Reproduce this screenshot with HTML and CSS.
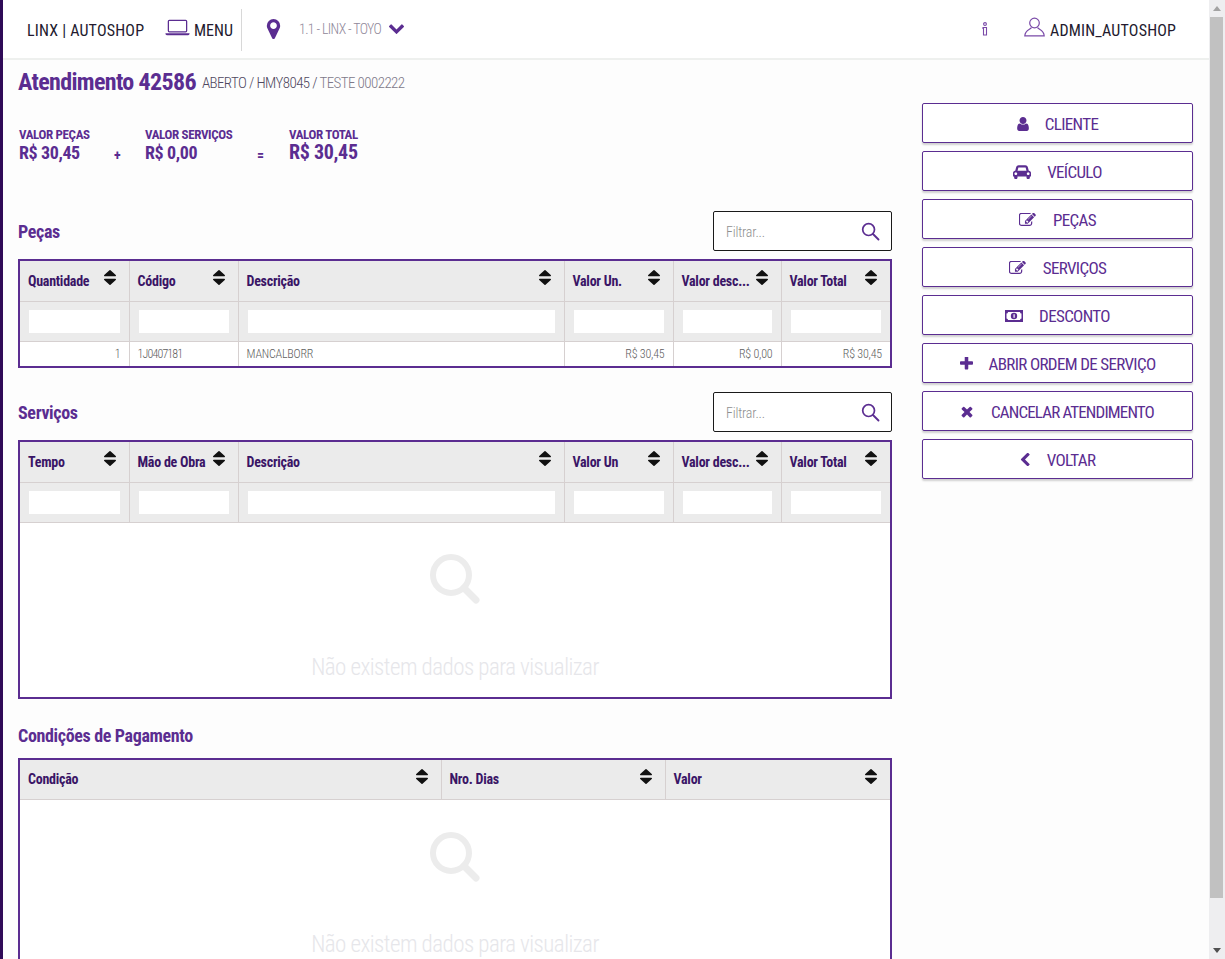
FILE: index.html
```html
<!DOCTYPE html>
<html lang="pt-BR">
<head>
<meta charset="utf-8">
<title>Atendimento 42586</title>
<link rel="stylesheet" href="styles.css">
</head>
<body>
<svg class="defs" width="0" height="0" aria-hidden="true">
  <symbol id="sort" viewBox="384 192 1024 1408" preserveAspectRatio="none"><path d="M1408 1088q0 26-19 45l-448 448q-19 19-45 19t-45-19l-448-448q-19-19-19-45t19-45 45-19h896q26 0 45 19t19 45zm0-384q0 26-19 45t-45 19h-896q-26 0-45-19t-19-45 19-45l448-448q19-19 45-19t45 19l448 448q19 19 19 45z"/></symbol>
  <symbol id="edit" viewBox="128 160 1664 1472"><path d="M888 1184l116-116-152-152-116 116v56h96v96h56zm440-720q-16-16-33 1l-350 350q-17 17-1 33t33-1l350-350q17-17 1-33zm80 594v190q0 119-84.500 203.500t-203.500 84.500h-832q-119 0-203.500-84.500t-84.500-203.500v-832q0-119 84.500-203.500t203.500-84.500h832q63 0 117 25 15 7 18 23 3 17-9 29l-49 49q-14 14-32 8-23-6-45-6h-832q-66 0-113 47t-47 113v832q0 66 47 113t113 47h832q66 0 113-47t47-113v-126q0-13 9-22l64-64q15-15 35-7t20 29zm-96-738l288 288-672 672h-288v-288zm444 132l-92 92-288-288 92-92q28-28 68-28t68 28l152 152q28 28 28 68t-28 68z"/></symbol>
  <symbol id="lens" viewBox="0 0 20 20"><circle cx="8" cy="8" r="6.200" fill="none" stroke="currentColor" stroke-width="1.800"/><path d="M12.600 12.600 L18.400 18.400" fill="none" stroke="currentColor" stroke-width="2" stroke-linecap="round"/></symbol>
  <symbol id="nodata" viewBox="0 0 50 50"><circle cx="21" cy="21" r="18" fill="none" stroke="currentColor" stroke-width="6"/><path d="M34 34 L46 46" fill="none" stroke="currentColor" stroke-width="7" stroke-linecap="round"/></symbol>
</svg>
<div class="app">
  <div class="rail"></div>
  <div class="page">
    <header class="topbar">
      <span class="brand">LINX | AUTOSHOP</span>
      <span class="menu">
        <svg class="laptop" viewBox="0 0 26 17"><rect x="3.500" y="1" width="19" height="12" rx="1" fill="none" stroke="currentColor" stroke-width="1.300"/><path d="M0.500 14.500 H25.500 V15 Q25.500 16.500 24 16.500 H2 Q0.500 16.500 0.500 15 Z" fill="currentColor"/></svg>
        <span class="menu-text">MENU</span>
      </span>
      <span class="store">
        <svg class="pin" viewBox="384 128 1024 1536"><path d="M1152 640q0-106-75-181t-181-75-181 75-75 181 75 181 181 75 181-75 75-181zm256 0q0 109-33 179l-364 774q-16 33-47.500 52t-67.500 19-67.500-19-46.500-52l-365-774q-33-70-33-179 0-212 150-362t362-150 362 150 150 362z"/></svg>
        <span class="store-name">1.1 - LINX - TOYO</span>
        <svg class="chev" viewBox="90 500 1610 1070"><path d="M1683 808l-742 741q-19 19-45 19t-45-19l-742-741q-19-19-19-45.500t19-45.500l166-165q19-19 45-19t45 19l531 531 531-531q19-19 45-19t45 19l166 165q19 19 19 45.500t-19 45.500z"/></svg>
      </span>
      <span class="info">
        <svg viewBox="0 0 6 14"><circle cx="3" cy="2" r="1.400" fill="none" stroke="currentColor" stroke-width="1.100"/><path d="M1 5.500 H4.500 V13 H1.500 V6.500 H1 Z" fill="none" stroke="currentColor" stroke-width="1.100"/></svg>
      </span>
      <span class="user">
        <svg viewBox="0 0 21 20"><circle cx="10.500" cy="6" r="4.800" fill="none" stroke="currentColor" stroke-width="1.200"/><path d="M7.500 10.500 C6.500 12.500 1 13 .8 18.900 H20.200 C20 13 14.500 12.500 13.500 10.500" fill="none" stroke="currentColor" stroke-width="1.200"/></svg>
        <span class="user-name">ADMIN_AUTOSHOP</span>
      </span>
    </header>

    <div class="title-row">
      <h1 class="title">Atendimento 42586</h1>
      <span class="crumb">ABERTO / HMY8045 / <span class="crumb-light">TESTE 0002222</span></span>
    </div>

    <div class="content">
      <main class="main">
        <section class="totals">
          <div class="total t1"><div class="t-label">VALOR PEÇAS</div><div class="t-value">R$ 30,45</div></div>
          <div class="op o1">+</div>
          <div class="total t2"><div class="t-label">VALOR SERVIÇOS</div><div class="t-value">R$ 0,00</div></div>
          <div class="op o2">=</div>
          <div class="total"><div class="t-label">VALOR TOTAL</div><div class="t-value big">R$ 30,45</div></div>
        </section>

        <section class="block b-pecas">
          <div class="block-head">
            <h2>Peças</h2>
            <div class="filter"><span class="filter-ph">Filtrar...</span><svg class="filter-icon"><use href="#lens"/></svg></div>
          </div>
          <div class="grid-box">
            <table class="grid">
              <colgroup><col class="c1"><col class="c2"><col class="c3"><col class="c4"><col class="c5"><col class="c6"></colgroup>
              <thead>
                <tr class="hrow">
                  <th><div class="th"><span>Quantidade</span><svg class="sort"><use href="#sort"/></svg></div></th>
                  <th><div class="th"><span>Código</span><svg class="sort"><use href="#sort"/></svg></div></th>
                  <th><div class="th"><span>Descrição</span><svg class="sort"><use href="#sort"/></svg></div></th>
                  <th><div class="th"><span>Valor Un.</span><svg class="sort"><use href="#sort"/></svg></div></th>
                  <th><div class="th"><span>Valor desc...</span><svg class="sort"><use href="#sort"/></svg></div></th>
                  <th><div class="th"><span>Valor Total</span><svg class="sort"><use href="#sort"/></svg></div></th>
                </tr>
                <tr class="frow">
                  <td><div class="cell-input"></div></td><td><div class="cell-input"></div></td><td><div class="cell-input"></div></td><td><div class="cell-input"></div></td><td><div class="cell-input"></div></td><td><div class="cell-input"></div></td>
                </tr>
              </thead>
              <tbody>
                <tr class="drow">
                  <td class="num">1</td><td class="code">1J0407181</td><td>MANCALBORR</td><td class="num">R$ 30,45</td><td class="num">R$ 0,00</td><td class="num">R$ 30,45</td>
                </tr>
              </tbody>
            </table>
          </div>
        </section>

        <section class="block b-serv">
          <div class="block-head">
            <h2>Serviços</h2>
            <div class="filter"><span class="filter-ph">Filtrar...</span><svg class="filter-icon"><use href="#lens"/></svg></div>
          </div>
          <div class="grid-box">
            <table class="grid">
              <colgroup><col class="c1"><col class="c2"><col class="c3"><col class="c4"><col class="c5"><col class="c6"></colgroup>
              <thead>
                <tr class="hrow">
                  <th><div class="th"><span>Tempo</span><svg class="sort"><use href="#sort"/></svg></div></th>
                  <th><div class="th"><span>Mão de Obra</span><svg class="sort"><use href="#sort"/></svg></div></th>
                  <th><div class="th"><span>Descrição</span><svg class="sort"><use href="#sort"/></svg></div></th>
                  <th><div class="th"><span>Valor Un</span><svg class="sort"><use href="#sort"/></svg></div></th>
                  <th><div class="th"><span>Valor desc...</span><svg class="sort"><use href="#sort"/></svg></div></th>
                  <th><div class="th"><span>Valor Total</span><svg class="sort"><use href="#sort"/></svg></div></th>
                </tr>
                <tr class="frow">
                  <td><div class="cell-input"></div></td><td><div class="cell-input"></div></td><td><div class="cell-input"></div></td><td><div class="cell-input"></div></td><td><div class="cell-input"></div></td><td><div class="cell-input"></div></td>
                </tr>
              </thead>
            </table>
            <div class="empty e-serv"><svg class="empty-icon"><use href="#nodata"/></svg><div class="empty-text">Não existem dados para visualizar</div></div>
          </div>
        </section>

        <section class="block b-pag">
          <div class="block-head plain"><h2>Condições de Pagamento</h2></div>
          <div class="grid-box">
            <table class="grid">
              <colgroup><col class="p1"><col class="p2"><col class="p3"></colgroup>
              <thead>
                <tr class="hrow">
                  <th><div class="th"><span>Condição</span><svg class="sort"><use href="#sort"/></svg></div></th>
                  <th><div class="th"><span>Nro. Dias</span><svg class="sort"><use href="#sort"/></svg></div></th>
                  <th><div class="th"><span>Valor</span><svg class="sort"><use href="#sort"/></svg></div></th>
                </tr>
              </thead>
            </table>
            <div class="empty e-pag"><svg class="empty-icon"><use href="#nodata"/></svg><div class="empty-text">Não existem dados para visualizar</div></div>
          </div>
        </section>
      </main>

      <aside class="actions">
        <button class="btn"><svg class="ico" viewBox="250 128 1292 1536"><path d="M1536 1399q0 109-62.500 187t-150.500 78h-854q-88 0-150.500-78t-62.500-187q0-85 8.500-160.500t31.500-152 58.500-131 94-89 134.500-34.500q131 128 313 128t313-128q76 0 134.500 34.500t94 89 58.500 131 31.500 152 8.500 160.500zm-256-887q0 159-112.500 271.500t-271.500 112.500-271.500-112.500-112.500-271.500 112.500-271.500 271.500-112.500 271.500 112.500 112.500 271.500z"/></svg><span>CLIENTE</span></button>
        <button class="btn"><svg class="ico wide" viewBox="0 150 2048 1500"><path d="M480 1088q0-66-47-113t-113-47-113 47-47 113 47 113 113 47 113-47 47-113zm36-320h1016l-89-357q-2-8-14-17.500t-21-9.500h-768q-9 0-21 9.500t-14 17.500zm1372 320q0-66-47-113t-113-47-113 47-47 113 47 113 113 47 113-47 47-113zm160-96v384q0 14-9 23t-23 9h-96v128q0 80-56 136t-136 56-136-56-56-136v-128h-1024v128q0 80-56 136t-136 56-136-56-56-136v-128h-96q-14 0-23-9t-9-23v-384q0-93 65.500-158.500t158.500-65.500h28l105-419q23-94 104-157.500t179-63.500h768q98 0 179 63.500t104 157.500l105 419h28q93 0 158.500 65.500t65.500 158.500z"/></svg><span>VEÍCULO</span></button>
        <button class="btn"><svg class="ico wide"><use href="#edit"/></svg><span>PEÇAS</span></button>
        <button class="btn"><svg class="ico wide"><use href="#edit"/></svg><span>SERVIÇOS</span></button>
        <button class="btn"><svg class="ico wide" viewBox="0 0 18 12"><path fill-rule="evenodd" d="M0 0H18V12H0Z M3 2 Q3 3.500 1.500 3.500 V8.500 Q3 8.500 3 10 H15 Q15 8.500 16.500 8.500 V3.500 Q15 3.500 15 2 Z"/><circle cx="9" cy="6" r="3.200"/><path d="M8.500 4.300 H9.700 V7.700 H8.500 Z" fill="#fff"/></svg><span>DESCONTO</span></button>
        <button class="btn"><svg class="ico plus" viewBox="192 192 1408 1408"><path d="M1600 736v192q0 40-28 68t-68 28h-416v416q0 40-28 68t-68 28h-192q-40 0-68-28t-28-68v-416h-416q-40 0-68-28t-28-68v-192q0-40 28-68t68-28h416v-416q0-40 28-68t68-28h192q40 0 68 28t28 68v416h416q40 0 68 28t28 68z"/></svg><span>ABRIR ORDEM DE SERVIÇO</span></button>
        <button class="btn tight"><svg class="ico times" viewBox="240 240 1310 1310"><path d="M1490 1322q0 40-28 68l-136 136q-28 28-68 28t-68-28l-294-294-294 294q-28 28-68 28t-68-28l-136-136q-28-28-28-68t28-68l294-294-294-294q-28-28-28-68t28-68l136-136q28-28 68-28t68 28l294 294 294-294q28-28 68-28t68 28l136 136q28 28 28 68t-28 68l-294 294 294 294q28 28 28 68z"/></svg><span>CANCELAR ATENDIMENTO</span></button>
        <button class="btn"><svg class="ico small" viewBox="340 128 1110 1536"><path d="M1427 301l-531 531 531 531q19 19 19 45t-19 45l-166 166q-19 19-45 19t-45-19l-742-742q-19-19-19-45t19-45l742-742q19-19 45-19t45 19l166 166q19 19 19 45t-19 45z" transform="translate(-60 64)"/></svg><span>VOLTAR</span></button>
      </aside>
    </div>
  </div>
  <div class="scrollbar">
    <div class="sb-arrow"><svg class="up" viewBox="0 0 16 17"><path d="M8 6 L12 11 H4 Z"/></svg></div>
    <div class="sb-thumb"></div>
    <div class="sb-arrow"><svg class="down" viewBox="0 0 16 17"><path d="M8 11 L12 6 H4 Z"/></svg></div>
  </div>
</div>
</body>
</html>
```
FILE: styles.css
```css
* { box-sizing: border-box; }
html, body { margin: 0; height: 100%; overflow: hidden; }
body {
  font-family: "Roboto Condensed", "Liberation Sans Narrow", Roboto, "Liberation Sans", sans-serif;
  background: #fdfdfd;
  color: #5b2d91;
}
.defs { position: absolute; }
.app { display: flex; height: 959px; overflow: hidden; }
.rail { width: 3px; flex: none; background: #2f0a57; }
.page { width: 1206px; flex: none; overflow: hidden; }

.topbar {
  height: 60px;
  display: flex;
  align-items: center;
  background: #fff;
  border-bottom: 2px solid #eef0ee;
  font-size: 16px;
  color: #231a2e;
}
.brand { margin-left: 24px; width: 117px; white-space: nowrap; margin-top: 3px; letter-spacing: .2px; }
.menu { display: flex; align-items: center; width: 77px; height: 42px; border-right: 1px solid #d8d8d8; margin-top: 1px; margin-left: 21px; }
.laptop { width: 25px; height: 17px; color: #5b2d91; margin-right: 4px; margin-top: -5px; }
.menu-text { white-space: nowrap; margin-top: 2px; }
.store { display: flex; align-items: center; margin-left: 24px; margin-top: -1px; }
.pin { width: 15px; height: 20px; fill: #5b2d91; }
.store-name { margin-left: 18px; font-size: 14px; font-weight: 300; letter-spacing: -.65px; color: #8f8799; white-space: nowrap; width: 90px; }
.chev { width: 15px; height: 10px; fill: #5b2d91; }
.info { margin-left: auto; display: flex; color: #7a4aa8; margin-right: 2px; }
.info svg { width: 6px; height: 14px; }
.user { display: flex; align-items: center; margin-left: 34px; margin-right: 32px; }
.user svg { width: 21px; height: 20px; color: #7a4aa8; margin-right: 5px; margin-top: -4px; }
.user-name { white-space: nowrap; width: 127px; letter-spacing: .2px; margin-top: 2px; }

.title-row { display: flex; align-items: center; height: 41px; padding: 3px 0 0 15px; }
.title { margin: 0; font-size: 24px; font-weight: 700; color: #5b2d91; white-space: nowrap; letter-spacing: -.65px; }
.crumb { margin: 1px 0 0 6px; font-size: 15px; font-weight: 300; letter-spacing: -.6px; color: #4f4860; white-space: nowrap; }
.crumb-light { color: #7e7989; }

.content { display: flex; padding-left: 15px; }
.main { width: 874px; flex: none; }
.actions { width: 271px; flex: none; margin-left: 30px; margin-top: 2px; display: flex; flex-direction: column; gap: 8px; }

.totals { display: flex; height: 110px; padding-top: 26px; }
.t1 { width: 94px; }
.t2 { width: 100px; }
.t-label { font-size: 13px; line-height: 15px; font-weight: 700; letter-spacing: -.35px; color: #5b2d91; white-space: nowrap; padding-left: 1px; }
.t-value { font-size: 18px; line-height: 21px; font-weight: 700; letter-spacing: -.4px; color: #5b2d91; white-space: nowrap; padding-left: 1px; }
.t-value.big { font-size: 20px; letter-spacing: -.3px; }
.op { font-size: 14px; font-weight: 700; padding-top: 20px; }
.o1 { width: 32px; padding-left: 2px; }
.o2 { width: 44px; padding-left: 13px; }

.block-head { display: flex; align-items: center; justify-content: space-between; height: 40px; margin-bottom: 8px; }
.block-head.plain { height: 28px; margin-bottom: 8px; }
h2 { margin: 0; font-size: 18px; font-weight: 700; letter-spacing: -.35px; color: #5b2d91; white-space: nowrap; }
.filter { width: 179px; height: 40px; background: #fff; border: 1px solid #1a1a1a; border-radius: 2px; display: flex; align-items: center; justify-content: space-between; padding: 0 11px 0 12px; }
.filter-ph { font-size: 14px; font-weight: 300; color: #8f8f8f; margin-top: 2px; letter-spacing: -.2px; }
.filter-icon { width: 19px; height: 19px; color: #5b2d91; }

.b-serv { margin-top: 24px; }
.b-pag { margin-top: 23px; }

.grid-box { border: 2px solid #5b2d91; background: #fff; }
.grid { width: 100%; border-collapse: collapse; table-layout: fixed; }
.c1 { width: 109px; }
.c2 { width: 109px; }
.c3 { width: 326px; }
.c4 { width: 109px; }
.c5 { width: 108px; }
.p1 { width: 421px; }
.p2 { width: 224px; }
.hrow th { height: 40px; background: #ebebeb; border-right: 1px solid #d6d0d0; border-bottom: 1px solid #d6d0d0; padding: 0 8px; text-align: left; font-size: 14px; font-weight: 700; letter-spacing: -.25px; color: #3a1566; }
.hrow th:last-child, .frow td:last-child { border-right: 0; }
.th { display: flex; justify-content: space-between; align-items: center; white-space: nowrap; }
.sort { width: 12px; height: 15px; flex: none; fill: #111; margin-top: -6px; margin-right: 5px; }
.frow td { height: 40px; background: #ebebeb; border-right: 1px solid #d6d0d0; border-bottom: 1px solid #d6d0d0; padding: 0 9px; }
.cell-input { height: 23px; background: #fff; }
.drow td { height: 25px; padding: 0 8px; font-size: 12px; font-weight: 300; letter-spacing: -.2px; color: #5e5e5e; border-right: 1px solid #d6d0d0; white-space: nowrap; background: #fff; }
.drow td:last-child { border-right: 0; }
.drow td.code { letter-spacing: -.85px; }
.drow td.num { text-align: right; padding-right: 8px; }

.empty { display: flex; flex-direction: column; align-items: center; background: #fff; }
.e-serv { height: 174px; padding-top: 31px; }
.e-pag { height: 160px; padding-top: 32px; }
.empty-icon { width: 50px; height: 50px; color: #ececec; }
.empty-text { margin-top: 49px; font-size: 23px; font-weight: 300; line-height: 30px; letter-spacing: -.55px; color: #e6e6ea; white-space: nowrap; }
.e-pag .empty-text { margin-top: 48px; }

.btn {
  height: 40px;
  display: flex; align-items: center; justify-content: center; gap: 16px;
  background: #fff;
  border: 1px solid #5b2d91;
  border-radius: 2px;
  box-shadow: 0 2px 2px rgba(0,0,0,.18);
  color: #5b2d91;
  font-family: inherit;
  font-size: 17px;
  letter-spacing: -.65px;
  padding: 2px 0 0;
}
.btn.tight { letter-spacing: -.85px; gap: 18px; }
.ico { width: 12px; height: 14px; fill: #5b2d91; margin-top: -1px; }
.ico.wide { width: 18px; height: 14px; }
.ico.small { width: 11px; height: 13px; }
.ico.plus { width: 13px; height: 13px; }
.ico.times { width: 12px; height: 13px; }

.scrollbar { width: 16px; flex: none; background: #eeeef0; display: flex; flex-direction: column; }
.sb-arrow { height: 17px; flex: none; }
.sb-arrow svg { display: block; width: 16px; height: 17px; }
.sb-arrow .up { fill: #a3a3a3; }
.sb-arrow .down { fill: #505050; }
.sb-thumb { flex: 1; background: #c1c1c1; margin: 0 2px 44px 1px; }
```
